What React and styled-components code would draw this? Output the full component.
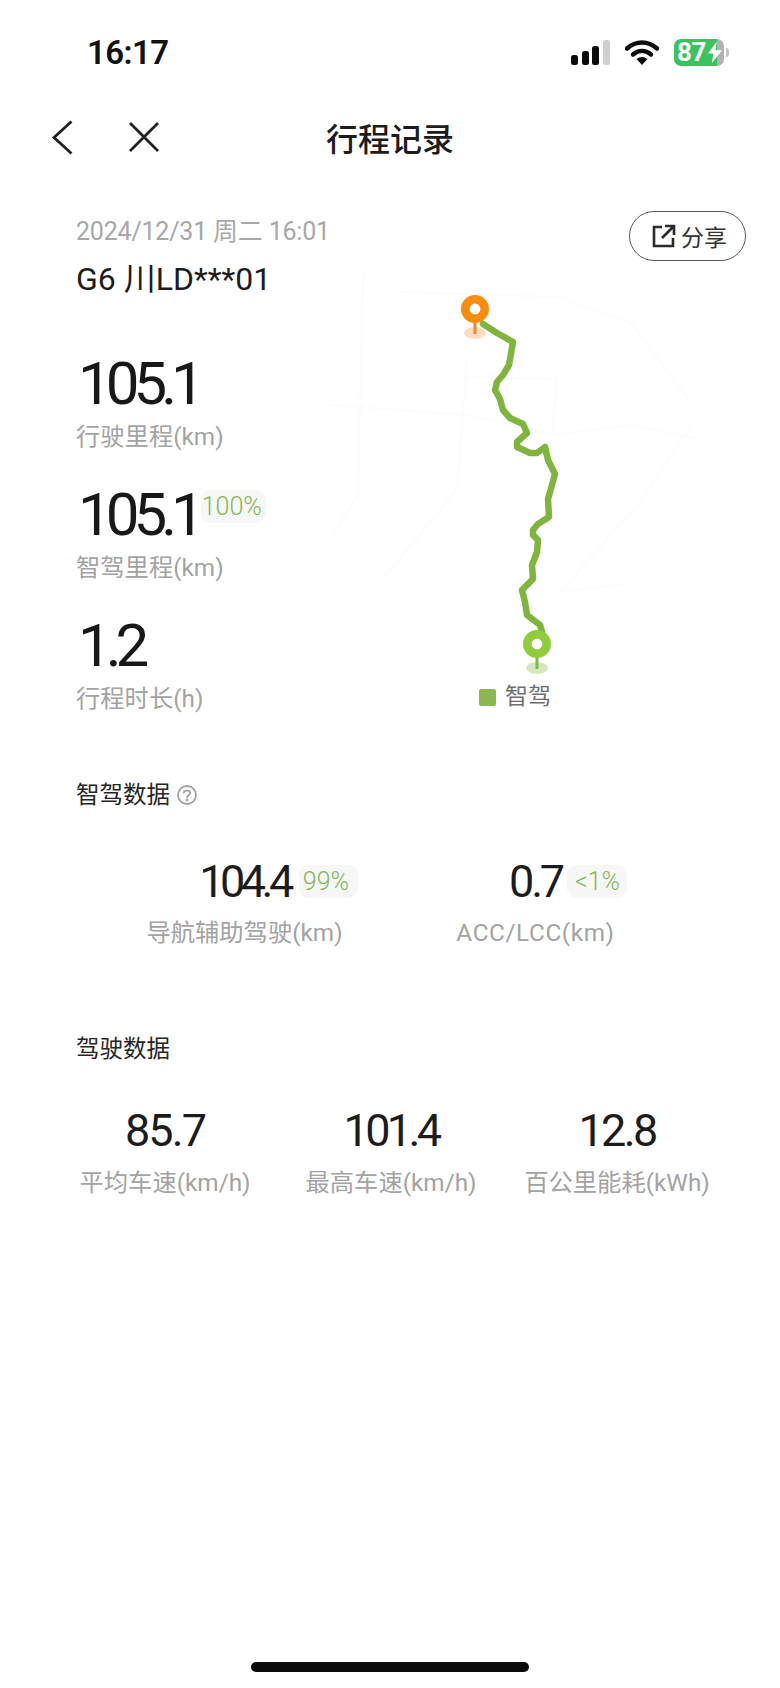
import React from 'react'
import styled, { createGlobalStyle } from 'styled-components'

const GlobalStyle = createGlobalStyle`
    html, body {
        margin: 0;
        padding: 0;
        background: #fff;
    }
    * {
        box-sizing: border-box;
    }
`

const font = `Roboto, "Noto Sans CJK SC", sans-serif`

const Page = styled.div`
    width: 780px;
    height: 1688px;
    display: flex;
    flex-direction: column;
    background: #fff;
    font-family: ${font};
    color: #1c1c1c;
    overflow: hidden;
`

const StatusBar = styled.div`
    display: flex;
    align-items: center;
    justify-content: space-between;
    height: 84px;
    padding: 20px 56px 0 87px;
`

const Clock = styled.div`
    font-size: 33px;
    font-weight: 600;
    letter-spacing: -0.6px;
    color: #111;
`

const StatusIcons = styled.div`
    display: flex;
    align-items: center;
    gap: 15px;
`

const Battery = styled.div`
    position: relative;
    width: 50px;
    height: 27px;
    border-radius: 7px;
    background: linear-gradient(90deg, #3dc262 0 86%, #b2b2b2 86% 100%);
    color: #fff;
    font-size: 26px;
    font-weight: 700;
    line-height: 27px;
    letter-spacing: -0.5px;
    padding-left: 3px;
    white-space: nowrap;
    overflow: visible;
`

const BatteryBolt = styled.svg`
    position: absolute;
    top: 2px;
    right: 2px;
`

const BatteryNub = styled.span`
    position: absolute;
    right: -5px;
    top: 9px;
    width: 3px;
    height: 9px;
    border-radius: 0 3px 3px 0;
    background: #c4c4c4;
`

const NavBar = styled.div`
    display: grid;
    grid-template-columns: 1fr auto 1fr;
    align-items: center;
    height: 52px;
    margin-top: 27px;
`

const NavIcons = styled.div`
    display: flex;
    align-items: center;
    gap: 55px;
    padding-left: 51px;
`

const Title = styled.h1`
    margin: 0;
    font-size: 32px;
    font-weight: 500;
    color: #1c1c1c;
`

const Summary = styled.section`
    position: relative;
    display: flex;
    margin-top: 53px;
`

const TripColumn = styled.div`
    width: 300px;
    flex-shrink: 0;
    padding-left: 76px;
`

const TripDate = styled.div`
    font-size: 25px;
    line-height: 32px;
    letter-spacing: -0.2px;
    color: #a8a8a8;
    white-space: nowrap;
`

const Plate = styled.div`
    margin-top: 14px;
    margin-bottom: 49px;
    font-size: 32px;
    line-height: 34px;
    white-space: nowrap;
    color: #1c1c1c;
`

const Metric = styled.div`
    height: 131px;
    padding-top: 4px;
`

const BigValue = styled.div`
    position: relative;
    display: inline-block;
    font-size: 60px;
    font-weight: 400;
    line-height: 70px;
    letter-spacing: -6px;
    padding-left: 2px;
    color: #181818;
`

const Label = styled.div`
    margin-top: 2px;
    font-size: 24.3px;
    line-height: 32px;
    color: #a3a3a3;
    white-space: nowrap;
`

const Badge = styled.span`
    position: absolute;
    top: ${props => props.$top}px;
    left: 100%;
    margin-left: ${props => props.$gap}px;
    height: 33px;
    padding: ${props => props.$pad};
    border-radius: 9px;
    background: #f7f8f6;
    color: #84b75a;
    font-size: 25px;
    font-weight: 300;
    line-height: 33px;
    letter-spacing: 0;
    white-space: nowrap;
`

const MapColumn = styled.div`
    flex: 1;
    display: flex;
    flex-direction: column;
    align-items: stretch;
    padding-top: 46px;
`

const Legend = styled.div`
    display: flex;
    align-items: center;
    gap: 9px;
    margin-top: 1px;
    padding-left: 179px;
    font-size: 23px;
    line-height: 32px;
    color: #6e6e6e;
`

const LegendDot = styled.span`
    width: 17px;
    height: 17px;
    border-radius: 2px;
    background: #8ab84f;
`

const ShareButton = styled.button`
    position: absolute;
    top: -5px;
    left: 629px;
    display: flex;
    align-items: center;
    gap: 5px;
    width: 117px;
    height: 50px;
    padding: 0 0 0 22px;
    border: 1px solid #5a5a5a;
    border-radius: 25px;
    background: #fff;
    color: #333;
    font-family: ${font};
    font-size: 23px;
`

const SectionTitle = styled.h2`
    display: flex;
    align-items: center;
    gap: 6px;
    margin: ${props => props.$top}px 0 0;
    padding-left: 76px;
    font-size: 23.5px;
    font-weight: 400;
    line-height: 32px;
    color: #262626;
`

const StatRow = styled.div`
    display: grid;
    grid-template-columns: repeat(${props => props.$cols}, ${props => props.$width}px);
    margin-top: ${props => props.$top}px;
    padding-left: ${props => props.$left}px;
`

const Stat = styled.div`
    display: flex;
    flex-direction: column;
    align-items: center;
`

const StatValue = styled.div`
    position: relative;
    font-size: 45px;
    line-height: 50px;
    letter-spacing: ${props => props.$spacing}px;
    color: #1c1c1c;
`

const StatLabel = styled(Label)`
    margin-top: ${props => props.$gap}px;
    letter-spacing: ${props => props.$spacing || 0}px;
`

const HomeBar = styled.div`
    width: 278px;
    height: 10px;
    margin: auto auto 16px;
    border-radius: 5px;
    background: #0a0a0a;
`

const roads = [
    'M363 273 L358 493 L330 537',
    'M330 403 L467 413 L553 433 L633 423 L700 437',
    'M467 353 L463 413 L457 487 L383 577',
    'M467 375 L557 377 L552 433',
    'M400 290 L560 295 L630 320 L690 400',
    'M690 425 L640 500 L560 590 L625 582',
]

const route = 'M483 322 L497 331 L513 340 L509 363 L503 373 L497 380 L495 388 L500 397 L503 408 L510 416 L523 422 L527 431 L517 440 L517 445 L530 451 L537 451 L545 445 L548 458 L555 472 L550 490 L548 497 L549 515 L538 522 L533 528 L533 533 L538 538 L537 550 L532 563 L533 577 L522 588 L525 600 L527 613 L540 623 L542 630'

const DRIVE_STATS = [
    { value: '85.7', label: '平均车速(km/h)', spacing: -1.9 },
    { value: '101.4', label: '最高车速(km/h)', spacing: -3.6 },
    { value: '12.8', label: '百公里能耗(kWh)', spacing: -2.7 },
]

const Pin = ({ x, y, color, shadow, stem }) => (
    <g>
        <ellipse cx={x} cy={y + 24} rx="11" ry="6" fill={shadow} />
        <rect x={x - 1.5} y={y + 10} width="3" height="15" fill={stem} />
        <circle cx={x} cy={y} r="9.7" fill="#fff" stroke={color} strokeWidth="8.6" />
    </g>
)

const App = () => {
    return (
        <Page>
            <GlobalStyle />
            <StatusBar>
                <Clock>16:17</Clock>
                <StatusIcons>
                    <svg width="39" height="25" viewBox="0 0 39 25">
                        <rect x="0" y="15" width="7" height="10" rx="2.5" fill="#0b0b0b" />
                        <rect x="11" y="11" width="7" height="14" rx="2.5" fill="#0b0b0b" />
                        <rect x="21" y="6" width="7" height="19" rx="2.5" fill="#0b0b0b" />
                        <rect x="32" y="0" width="7" height="25" rx="2.5" fill="#cfcfcf" />
                    </svg>
                    <svg width="34" height="25" viewBox="0 0 34 25">
                        <path d="M2 8.5 C11 0.5 23 0.5 32 8.5" fill="none" stroke="#0b0b0b" strokeWidth="4.4" strokeLinecap="round" />
                        <path d="M8 14.5 C13.5 9.8 20.5 9.8 26 14.5" fill="none" stroke="#0b0b0b" strokeWidth="4.4" strokeLinecap="round" />
                        <path d="M11.5 19 L17 25 L22.5 19 C19 16.3 15 16.3 11.5 19 Z" fill="#0b0b0b" />
                    </svg>
                    <Battery>
                        87
                        <BatteryBolt width="14" height="23" viewBox="0 0 13 20">
                            <path d="M8 0 L0 11 H5 L3.5 20 L13 8 H7 Z" fill="#fff" />
                        </BatteryBolt>
                        <BatteryNub />
                    </Battery>
                </StatusIcons>
            </StatusBar>

            <NavBar>
                <NavIcons>
                    <svg width="22" height="35" viewBox="0 0 22 35" fill="none" stroke="#222" strokeWidth="2.8">
                        <path d="M20.5 1.5 L3 17.5 L20.5 33.5" />
                    </svg>
                    <svg width="32" height="32" viewBox="0 0 32 32" fill="none" stroke="#222" strokeWidth="2.8">
                        <path d="M2 2 L30 30 M30 2 L2 30" />
                    </svg>
                </NavIcons>
                <Title>行程记录</Title>
            </NavBar>

            <Summary>
                <TripColumn>
                    <TripDate>2024/12/31 周二 16:01</TripDate>
                    <Plate>G6 川LD***01</Plate>
                    <Metric>
                        <BigValue>105.1</BigValue>
                        <Label>行驶里程(km)</Label>
                    </Metric>
                    <Metric>
                        <BigValue>105.1<Badge $top={10} $gap={2} $pad="0 4px 0 1px">100%</Badge></BigValue>
                        <Label>智驾里程(km)</Label>
                    </Metric>
                    <Metric>
                        <BigValue>1.2</BigValue>
                        <Label>行程时长(h)</Label>
                    </Metric>
                </TripColumn>

                <MapColumn>
                    <svg width="480" height="418" viewBox="300 260 480 418">
                        {roads.map(d => (
                            <path key={d} d={d} fill="none" stroke="#fbfcfb" strokeWidth="2" />
                        ))}
                        <Pin x={475} y={307} color="#f98d12" shadow="#fcdcc3" stem="#ec8a2c" />
                        <path d={route} fill="none" stroke="#7fb53c" strokeWidth="6.5" strokeLinejoin="round" strokeLinecap="round" />
                        <Pin x={537} y={642} color="#8fcd3c" shadow="#d5e8bd" stem="#84b848" />
                    </svg>
                    <Legend>
                        <LegendDot />
                        智驾
                    </Legend>
                </MapColumn>

                <ShareButton>
                    <svg width="24" height="24" viewBox="0 0 24 24" fill="none" stroke="#2a2a2a" strokeWidth="2.6">
                        <path d="M10 3 H2 V22 H21 V14" />
                        <path d="M10 14 L21 3 M13 2 H22 V11" />
                    </svg>
                    分享
                </ShareButton>
            </Summary>

            <SectionTitle $top={41}>
                智驾数据
                <svg width="22" height="22" viewBox="0 0 22 22" fill="none" stroke="#a3a3a3" strokeWidth="1.8">
                    <circle cx="11" cy="11" r="9" />
                    <path d="M7.8 8.6 C8 6.2 14 5.8 14.2 8.8 C14.3 11 11 10.8 11 13.4" strokeLinecap="round" />
                    <circle cx="11" cy="16" r="0.6" />
                </svg>
            </SectionTitle>
            <StatRow $cols={2} $width={291} $top={46} $left={99}>
                <Stat>
                    <StatValue $spacing={-4.5}>104.4<Badge $top={8} $gap={9} $pad="0 9px 0 4px">99%</Badge></StatValue>
                    <StatLabel $gap={10}>导航辅助驾驶(km)</StatLabel>
                </Stat>
                <Stat>
                    <StatValue $spacing={-3.2}>0.7<Badge $top={8} $gap={5} $pad="0 7px 0 8px">&lt;1%</Badge></StatValue>
                    <StatLabel $gap={10} $spacing={0.6}>ACC/LCC(km)</StatLabel>
                </Stat>
            </StatRow>

            <SectionTitle $top={84}>驾驶数据</SectionTitle>
            <StatRow $cols={3} $width={226} $top={41} $left={52}>
                {DRIVE_STATS.map(stat => (
                    <Stat key={stat.label}>
                        <StatValue $spacing={stat.spacing}>{stat.value}</StatValue>
                        <StatLabel $gap={11}>{stat.label}</StatLabel>
                    </Stat>
                ))}
            </StatRow>

            <HomeBar />
        </Page>
    )
}

export default App
